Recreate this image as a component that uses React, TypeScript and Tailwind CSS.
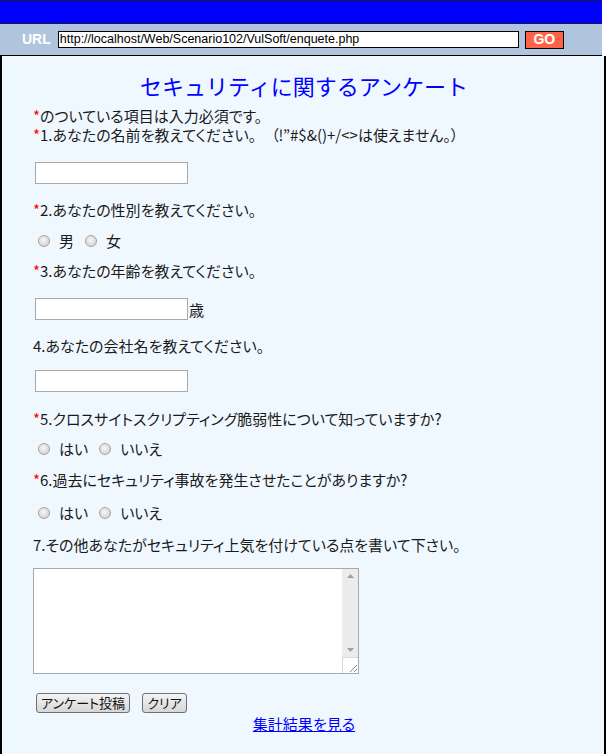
const jp = "font-['Noto_Sans_CJK_JP',sans-serif] [font-feature-settings:'palt']";

function Req() {
  return <span className="text-[#ff0000]">*</span>;
}

function Radio() {
  return (
    <span className="inline-block w-[12px] h-[12px] rounded-full border border-[#a4a4a4] bg-[radial-gradient(circle_at_45%_40%,#f6f6f6,#cacaca)]" />
  );
}

function RadioRow({ labels }: { labels: string[] }) {
  return (
    <div className="flex items-center h-[19px] pl-[5px]">
      {labels.map((l, i) => (
        <div key={l} className={`flex items-center ${i > 0 ? 'ml-[11px]' : ''}`}>
          <Radio />
          <span className="ml-[9px]">{l}</span>
        </div>
      ))}
    </div>
  );
}

function TextBox() {
  return <div className="w-[153px] h-[22px] ml-[2px] border border-[#a9a9a9] bg-white" />;
}

function Question({ text, required }: { text: string; required?: boolean }) {
  return (
    <p className="h-[19px] whitespace-nowrap">
      {required && <Req />}
      {text}
    </p>
  );
}

export default function App() {
  return (
    <div className={`w-[606px] text-[15px] leading-[19px] text-[#1a1a1a] ${jp}`}>
      {/* browser-ish header */}
      <div className="w-[602px] h-[24px] bg-[#0000ff] border-t border-b border-[#1a1a3a]" />
      <div className="w-[602px] h-[32px] bg-[#b0c4de] flex items-center pl-[22px] border-b border-black">
        <span className="text-white font-bold text-[14px] font-['Liberation_Sans',sans-serif]">URL</span>
        <div className="ml-[7px] w-[461px] h-[17px] bg-white border border-black flex items-center px-[1px] text-[12.5px] text-black font-['Liberation_Sans',sans-serif]">
          http://localhost/Web/Scenario102/VulSoft/enquete.php
        </div>
        <div className="ml-[6px] w-[39px] h-[18px] bg-[#ff6347] border border-black flex items-center justify-center text-white text-[14px] font-bold font-['Liberation_Sans',sans-serif]">
          GO
        </div>
      </div>

      {/* form */}
      <div className="bg-[#f0f8ff] border-x-2 border-black pl-[31px] pt-[15px] pb-[40px]">
        <h1 className="text-[22px] leading-[28px] text-[#0000ff] text-center pr-[29px] [font-feature-settings:normal]">
          セキュリティに関するアンケート
        </h1>

        <p className="mt-[7px] h-[19px]">
          <Req />のついている項目は入力必須です。
        </p>
        <Question required text="1.あなたの名前を教えてください。　（!”#$&()+/<>は使えません。）" />
        <div className="mt-[18px]">
          <TextBox />
        </div>

        <div className="mt-[16px]">
          <Question required text="2.あなたの性別を教えてください。" />
        </div>
        <div className="mt-[12px]">
          <RadioRow labels={['男', '女']} />
        </div>

        <div className="mt-[11px]">
          <Question required text="3.あなたの年齢を教えてください。" />
        </div>
        <div className="mt-[18px] flex items-center">
          <TextBox />
          <span className="ml-[1px]">歳</span>
        </div>

        <div className="mt-[16px]">
          <Question text="4.あなたの会社名を教えてください。" />
        </div>
        <div className="mt-[15px]">
          <TextBox />
        </div>

        <div className="mt-[17px]">
          <Question required text="5.クロスサイトスクリプティング脆弱性について知っていますか?" />
        </div>
        <div className="mt-[11px]">
          <RadioRow labels={['はい', 'いいえ']} />
        </div>

        <div className="mt-[12px]">
          <Question required text="6.過去にセキュリティ事故を発生させたことがありますか?" />
        </div>
        <div className="mt-[14px]">
          <RadioRow labels={['はい', 'いいえ']} />
        </div>

        <div className="mt-[13px]">
          <Question text="7.その他あなたがセキュリティ上気を付けている点を書いて下さい。" />
        </div>

        {/* textarea */}
        <div className="mt-[14px] w-[326px] h-[106px] border border-[#a9a9a9] bg-white flex">
          <div className="flex-1" />
          <div className="w-[16px] flex flex-col">
            <div className="flex-1 bg-[#ececec] flex flex-col items-center justify-between py-[5px]">
              <svg width="7" height="4" viewBox="0 0 7 4"><path d="M0 4 L3.5 0 L7 4 Z" fill="#a0a0a0" /></svg>
              <svg width="7" height="4" viewBox="0 0 7 4"><path d="M0 0 L3.5 4 L7 0 Z" fill="#a0a0a0" /></svg>
            </div>
            <div className="h-[16px] bg-white border-t border-l border-[#d8d8d8] flex items-end justify-end p-[1px]">
              <svg width="8" height="8" viewBox="0 0 8 8">
                <path d="M8 1 L1 8 M8 5 L5 8" stroke="#888" strokeWidth="1" />
              </svg>
            </div>
          </div>
        </div>

        {/* buttons */}
        <div className="mt-[19px] ml-[3px] flex items-center gap-[12px]">
          <button className="w-[94px] h-[20px] border border-[#707070] rounded-[3px] bg-[linear-gradient(#f4f4f4,#d6d6d6)] text-[13px] leading-[18px] text-[#111]">
            アンケート投稿
          </button>
          <button className="w-[45px] h-[20px] border border-[#707070] rounded-[3px] bg-[linear-gradient(#f4f4f4,#d6d6d6)] text-[13px] leading-[18px] text-[#111]">
            クリア
          </button>
        </div>

        <div className="mt-[1px] text-center pr-[29px]">
          <a href="#" className="text-[#0000ff] underline text-[15px]">集計結果を見る</a>
        </div>
      </div>
    </div>
  );
}
